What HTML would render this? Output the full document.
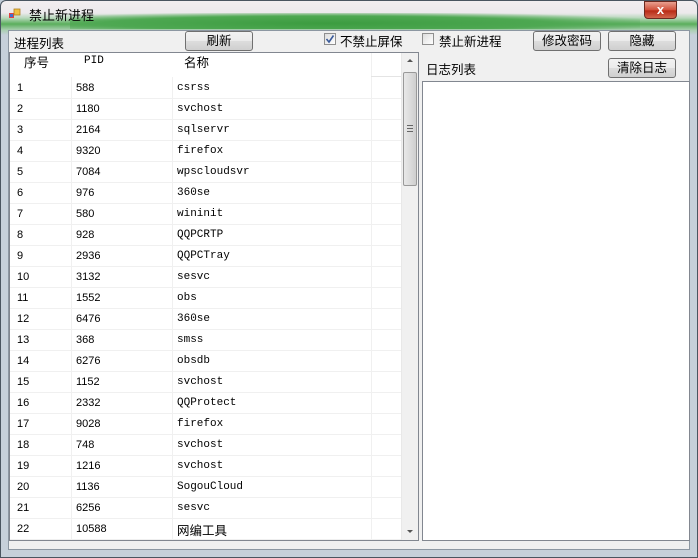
<!DOCTYPE html>
<html><head><meta charset="utf-8"><style>
*{margin:0;padding:0;box-sizing:border-box}
body{width:698px;height:558px;overflow:hidden;position:relative;background:#bfcad6;font-family:"Liberation Sans","Noto Sans CJK SC","WenQuanYi Zen Hei",sans-serif;font-size:12px;color:#000}
.frame{position:absolute;left:0;top:0;width:698px;height:558px;border:1px solid #4a5560;border-radius:6px 6px 0 0;background:linear-gradient(#f2eef0 0,#ece9ec 12px,#b8d8bc 17px,#5aae5c 23px,#a9cfb0 29px,#c6d0da 34px)}
.green{position:absolute;left:70px;top:13px;width:570px;height:16px;background:radial-gradient(ellipse at 45% 65%,#3c9c40 0,#4ea852 50%,rgba(200,225,205,0) 80%)}
.title{position:absolute;left:29px;top:5px;font-size:13px}
.icon{position:absolute;left:9px;top:8px;width:12px;height:12px}
.close{position:absolute;left:644px;top:1px;width:33px;height:18px;border:1px solid #6b2a20;border-radius:0 0 4px 4px;background:linear-gradient(#e9a090,#d0503a 50%,#b82a15 55%,#d2654c);color:#fff;text-align:center;font-weight:bold;font-size:13px;line-height:16px}
.client{position:absolute;left:8px;top:30px;width:682px;height:520px;background:#f0f0f0;border:1px solid #8c97a2}
.abs{position:absolute}
.lbl{position:absolute;font-size:12.5px}
.btn{position:absolute;height:20px;border:1px solid #707070;border-radius:3px;background:linear-gradient(#f2f2f2,#ebebeb 50%,#dddddd 51%,#cfcfcf);text-align:center;line-height:18px;font-size:12.5px}
.cb{position:absolute;width:12px;height:12px;border:1px solid #8f8f8f;background:linear-gradient(135deg,#ddd,#fff)}
.list{position:absolute;left:9px;top:52px;width:410px;height:489px;border:1px solid #828790;background:#fff;overflow:hidden}
.row{position:absolute;left:0;width:391px;height:21px;border-bottom:1px solid #f0f0f0;font-family:"Liberation Mono","Noto Sans CJK SC",monospace;font-size:11px;line-height:21px}
.row span{position:absolute;top:0}
.vl{position:absolute;top:0;width:1px;height:487px;background:#f0f0f0}
.sb{position:absolute;left:391px;top:0;width:17px;height:487px;background:#f0f0f0;border-left:1px solid #e8e8e8}
.log{position:absolute;left:422px;top:81px;width:268px;height:460px;border:1px solid #828790;background:#fff}
</style></head><body>
<div class="frame"></div>
<div class="green"></div>
<svg class="icon" viewBox="0 0 12 12"><rect x="0" y="5" width="5" height="5" fill="#e04040"/><rect x="5" y="1" width="6" height="6" fill="#f0c040" stroke="#b08020" stroke-width=".8"/><rect x="1" y="6" width="3" height="3" fill="#4070d0"/></svg>
<div class="title">禁止新进程</div>
<div class="close">x</div>
<div class="client"></div>
<div class="lbl" style="left:14px;top:33px">进程列表</div>
<div class="btn" style="left:185px;top:31px;width:68px">刷新</div>
<div class="cb" style="left:324px;top:33px;"><svg width="10" height="10" viewBox="0 0 10 10" style="position:absolute;left:0;top:0"><path d="M1.5 5 L4 8 L8.5 1.5" stroke="#3a5a9a" stroke-width="1.6" fill="none"/></svg></div>
<div class="lbl" style="left:340px;top:31px">不禁止屏保</div>
<div class="cb" style="left:422px;top:33px"></div>
<div class="lbl" style="left:439px;top:31px">禁止新进程</div>
<div class="btn" style="left:533px;top:31px;width:68px">修改密码</div>
<div class="btn" style="left:608px;top:31px;width:68px">隐藏</div>
<div class="lbl" style="left:426px;top:59px">日志列表</div>
<div class="btn" style="left:608px;top:58px;width:68px">清除日志</div>
<div class="log"></div>
<div class="list">
<div class="lbl" style="left:14px;top:-1px">序号</div>
<div class="abs" style="left:74px;top:2px;font-family:'Liberation Mono',monospace;font-size:11px">PID</div>
<div class="lbl" style="left:174px;top:-1px">名称</div>
<div class="vl" style="left:61px;top:24px"></div>
<div class="vl" style="left:162px;top:24px"></div>
<div class="vl" style="left:361px"></div>
<div class="abs" style="left:361px;top:23px;width:30px;height:1px;background:#e4e4e4"></div>
<div id="rows"></div>
<div class="sb">
<div class="abs" style="left:5px;top:6px;width:0;height:0;border-left:3px solid transparent;border-right:3px solid transparent;border-bottom:3px solid #555"></div>
<div class="abs" style="left:1px;top:19px;width:14px;height:114px;border:1px solid #999;border-radius:2px;background:linear-gradient(90deg,#e8e8e8,#dcdcdc 50%,#cfcfcf)"></div>
<div class="abs" style="left:5px;top:72px;width:6px;height:7px;border-top:1px solid #666;border-bottom:1px solid #666"></div>
<div class="abs" style="left:5px;top:75px;width:6px;height:1px;background:#666"></div>
<div class="abs" style="left:5px;top:477px;width:0;height:0;border-left:3px solid transparent;border-right:3px solid transparent;border-top:3px solid #555"></div>
</div>
</div>
<script>
var d=[["1","588","csrss"],["2","1180","svchost"],["3","2164","sqlservr"],["4","9320","firefox"],["5","7084","wpscloudsvr"],["6","976","360se"],["7","580","wininit"],["8","928","QQPCRTP"],["9","2936","QQPCTray"],["10","3132","sesvc"],["11","1552","obs"],["12","6476","360se"],["13","368","smss"],["14","6276","obsdb"],["15","1152","svchost"],["16","2332","QQProtect"],["17","9028","firefox"],["18","748","svchost"],["19","1216","svchost"],["20","1136","SogouCloud"],["21","6256","sesvc"],["22","10588","网编工具"]];
var h="";d.forEach(function(r,i){var t=25+i*21;h+='<div class="row" style="top:'+t+'px"><span style="left:7px;font-family:\'Liberation Sans\',sans-serif">'+r[0]+'</span><span style="left:66px;font-family:\'Liberation Sans\',sans-serif">'+r[1]+'</span><span style="left:167px'+(i==21?';font-family:\'Noto Sans CJK SC\',sans-serif;font-size:12.5px':'')+'">'+r[2]+'</span></div>'});
document.getElementById("rows").innerHTML=h;
</script>
</body></html>
